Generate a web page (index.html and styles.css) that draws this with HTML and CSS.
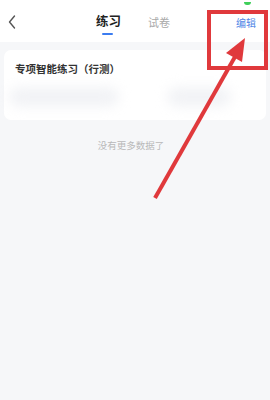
FILE: index.html
```html
<!DOCTYPE html>
<html lang="zh">
<head>
<meta charset="utf-8">
<link rel="stylesheet" href="styles.css">
</head>
<body>
<div class="screen">
  <div class="status"><span class="dot"></span></div>
  <header class="header">
    <svg class="back" width="8" height="14" viewBox="0 0 8 14"><path d="M6.5 1 L1.5 7 L6.5 13" fill="none" stroke="#555" stroke-width="1.4" stroke-linecap="round" stroke-linejoin="round"/></svg>
    <div class="tabs">
      <div class="tab active">练习<span class="bar"></span></div>
      <div class="tab">试卷</div>
    </div>
    <div class="edit">编辑</div>
  </header>
  <section class="card">
    <div class="card-title">专项智能练习（行测）</div>
    <div class="blur-row">
      <span class="blob b1"></span>
      <span class="blob b2"></span>
    </div>
  </section>
  <div class="empty">没有更多数据了</div>
  <div class="mark-box"></div>
  <svg class="arrow" width="270" height="400" viewBox="0 0 270 400">
    <line x1="155" y1="198" x2="236" y2="55" stroke="#e0393c" stroke-width="4" stroke-linecap="butt"/>
    <polygon points="245,38 226,53 242,62" fill="#e0393c"/>
  </svg>
</div>
</body>
</html>
```
FILE: styles.css
```css
html, body {
  margin: 0;
  padding: 0;
}
body {
  width: 270px;
  height: 400px;
  overflow: hidden;
  background: #f6f7f9;
  font-family: "Noto Sans CJK SC", "Noto Sans", sans-serif;
}
.screen {
  position: relative;
  width: 270px;
  height: 400px;
}
.status {
  height: 0;
}
.dot {
  position: absolute;
  left: 244px;
  top: 2px;
  width: 7px;
  height: 3px;
  border-radius: 0 0 4px 4px;
  background: #3fcf5a;
}
.header {
  height: 42px;
  background: #fff;
  display: flex;
  align-items: center;
  padding: 0 14px 0 8px;
  box-sizing: border-box;
}
.back {
  display: block;
  margin-top: 2px;
}
.tabs {
  display: flex;
  margin-left: 80px;
  gap: 27px;
  align-items: center;
}
.tab {
  position: relative;
  font-size: 11px;
  color: #a8a8a8;
  line-height: 14px;
  margin-top: 2px;
}
.tab.active {
  font-size: 12.5px;
  font-weight: 700;
  color: #222;
  margin-top: 0;
}
.bar {
  position: absolute;
  left: 6px;
  top: 19px;
  width: 11px;
  height: 2px;
  border-radius: 1px;
  background: #3b7cf0;
}
.edit {
  margin-left: auto;
  font-size: 10px;
  color: #4f86e6;
  margin-top: 3px;
}
.card {
  margin: 8px 4px 0;
  height: 70px;
  background: #fff;
  border-radius: 7px;
  box-sizing: border-box;
  padding: 11px 11px 0;
}
.card-title {
  font-size: 10.5px;
  font-weight: 600;
  color: #333;
  line-height: 16px;
}
.blur-row {
  display: flex;
  justify-content: space-between;
  margin-top: 10px;
  padding: 0 24px 0 0;
}
.blob {
  display: block;
  height: 20px;
  border-radius: 10px;
  background: #f2f3f6;
  filter: blur(6px);
}
.b1 { width: 110px; margin-left: -6px; }
.b2 { width: 64px; }
.empty {
  margin-top: 18px;
  text-align: center;
  font-size: 9.5px;
  color: #b9b9b9;
  line-height: 14px;
  padding-right: 8px;
}
.mark-box {
  position: absolute;
  left: 207px;
  top: 10px;
  width: 61px;
  height: 60px;
  box-sizing: border-box;
  border: 4px solid #e0393c;
}
.arrow {
  position: absolute;
  left: 0;
  top: 0;
  pointer-events: none;
}
```
